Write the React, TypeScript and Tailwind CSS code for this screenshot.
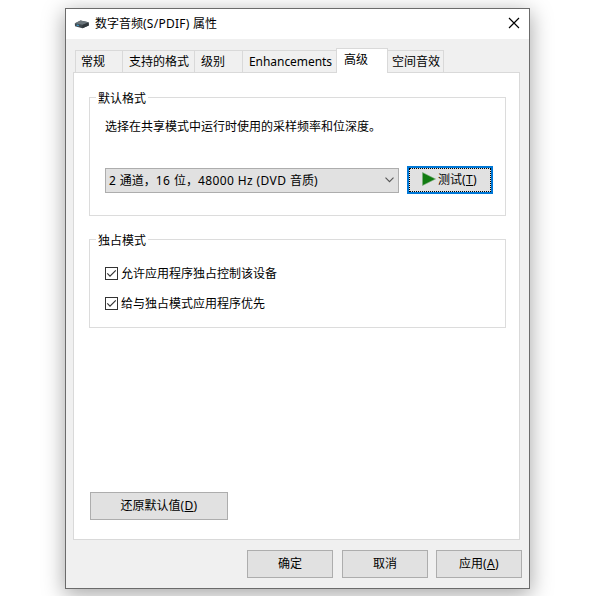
import type { ReactNode } from "react";

function Label({ children, className = "" }: { children: ReactNode; className?: string }) {
  return <span className={`whitespace-pre text-[12px] leading-[16px] ${className}`}>{children}</span>;
}

function PushButton({ children, className = "" }: { children: ReactNode; className?: string }) {
  return (
    <button className={`flex h-7 items-center justify-center border border-[#adadad] bg-[#e1e1e1] ${className}`}>
      {children}
    </button>
  );
}

function AccessKey({ letter }: { letter: string }) {
  return (
    <span className="tracking-[0.4px]">
      (<u className="underline-offset-1">{letter}</u>)
    </span>
  );
}

function Tab({ children, className = "" }: { children: ReactNode; className?: string }) {
  return (
    <div className={`h-[22px] border-t border-r border-[#d9d9d9] bg-[#f0f0f0] pt-[3px] ${className}`}>
      <Label className="block">{children}</Label>
    </div>
  );
}

function Group({ title, children, className = "" }: { title: string; children: ReactNode; className?: string }) {
  return (
    <section className={`w-[417px] border border-[#dcdcdc] ${className}`}>
      <div className="-mt-[7px] ml-[6px] flex w-[52px] bg-white pl-[2px]">
        <Label>{title}</Label>
      </div>
      {children}
    </section>
  );
}

function CheckRow({ children }: { children: ReactNode }) {
  return (
    <div className="flex h-4 items-start">
      <svg width="13" height="13" viewBox="0 0 13 13" className="shrink-0">
        <rect x="0.5" y="0.5" width="12" height="12" fill="#fff" stroke="#333" />
        <path d="M2.3 6.4 5 9.1 10.8 3.3" fill="none" stroke="#333" strokeWidth="1.2" />
      </svg>
      <Label className="-mt-px ml-[3px]">{children}</Label>
    </div>
  );
}

function DeviceIcon() {
  return (
    <svg width="16" height="16" viewBox="0 0 16 16">
      <path d="M0.8 7.4 6.5 4.6 14.6 6.3 14.8 9.4 8.4 12.2 1 10.2Z" fill="#3f484e" />
      <path d="M0.8 7.2 6.5 4.4 14.6 6.3 8.5 8.8Z" fill="#6b757b" />
      <path d="M8.5 8.9 14.6 6.4 14.8 9.4 8.4 12.2Z" fill="#30373c" />
      <path d="M2.6 9 4.8 9.6" stroke="#42a5d4" strokeWidth="1.2" />
    </svg>
  );
}

export default function App() {
  return (
    <div className="h-[596px] w-[600px] overflow-hidden bg-white pt-2 pl-[65px] font-['Noto_Sans','Noto_Sans_CJK_SC',sans-serif] text-black">
      <main className="flex h-[581px] w-[465px] flex-col border border-[#6b6b6b] bg-[#f0f0f0] shadow-[0_5px_20px_1px_rgba(0,0,0,0.34)]">
        <header className="flex h-[30px] shrink-0 items-center bg-white pl-2">
          <DeviceIcon />
          <Label className="ml-[5px]">数字音频<span className="tracking-[0.25px]">(S/PDIF) </span>属性</Label>
          <svg width="12" height="12" viewBox="0 0 12 12" className="mr-[9px] mb-[2px] ml-auto">
            <path d="M1 1 11 11M11 1 1 11" stroke="#000" strokeWidth="1.15" />
          </svg>
        </header>
        <nav className="mt-[9px] flex h-6 shrink-0 items-end pl-[9px]">
          <Tab className="w-12 border-l pl-[5px]">常规</Tab>
          <Tab className="w-[72px] pl-[6px]">支持的格式</Tab>
          <Tab className="w-12 pl-[6px]">级别</Tab>
          <Tab className="w-[93px] border-r-0 pl-[6px]"><span className="tracking-[-0.05px]">Enhancements</span></Tab>
          <div className="relative -mb-px h-[25px] w-[52px] border border-b-0 border-[#d9d9d9] bg-white pt-[3px] pl-[7px]">
            <Label className="block">高级</Label>
          </div>
          <Tab className="w-14 pl-1">空间音效</Tab>
        </nav>
        <div className="ml-[7px] h-[468px] w-[447px] shrink-0 border border-[#d9d9d9] bg-white pt-6 pl-[15px]">
          <Group title="默认格式" className="h-[119px]">
            <div className="mt-3 ml-[15px] flex">
              <Label>选择在共享模式中运行时使用的采样频率和位深度。</Label>
            </div>
            <div className="mt-[31px] ml-[15px] flex items-center gap-2">
              <div className="flex h-[25px] w-[294px] items-center justify-between border border-[#adadad] bg-[#e1e1e1] pr-1 pl-[3px]">
                <Label className="pt-px tracking-[0.4px]">2 <span className="tracking-normal">通道，</span>16 <span className="tracking-normal">位，</span>48000 Hz (DVD <span className="tracking-normal">音质</span>)</Label>
                <svg width="9" height="6" viewBox="0 0 9 6">
                  <path d="M0.5 0.7 4.5 4.7 8.5 0.7" fill="none" stroke="#555" strokeWidth="1.1" />
                </svg>
              </div>
              <button className="h-7 w-[86px] border-2 border-[#0078d7] bg-[#e1e1e1]">
                <span className="flex h-full items-center border border-dotted border-black pl-3">
                  <svg width="14" height="14" viewBox="0 0 14 14" className="mb-[2px] shrink-0">
                    <path d="M0.5 0.5 13.5 7 0.5 13.5Z" fill="#127c12" stroke="#7dae7d" strokeWidth="0.6" />
                  </svg>
                  <Label className="ml-[2px]">测试<AccessKey letter="T" /></Label>
                </span>
              </button>
            </div>
          </Group>
          <Group title="独占模式" className="mt-[23px] h-[89px]">
            <div className="mt-[18px] ml-[15px] flex flex-col gap-[14px]">
              <CheckRow>允许应用程序独占控制该设备</CheckRow>
              <CheckRow>给与独占模式应用程序优先</CheckRow>
            </div>
          </Group>
          <PushButton className="mt-[164px] ml-px w-[138px]">
            <Label>还原默认值<AccessKey letter="D" /></Label>
          </PushButton>
        </div>
        <footer className="mt-[10px] flex justify-end pr-[7px]">
          <PushButton className="w-[86px]"><Label>确定</Label></PushButton>
          <PushButton className="ml-[9px] w-[86px]"><Label>取消</Label></PushButton>
          <PushButton className="ml-2 w-[86px]"><Label>应用<AccessKey letter="A" /></Label></PushButton>
        </footer>
      </main>
    </div>
  );
}
